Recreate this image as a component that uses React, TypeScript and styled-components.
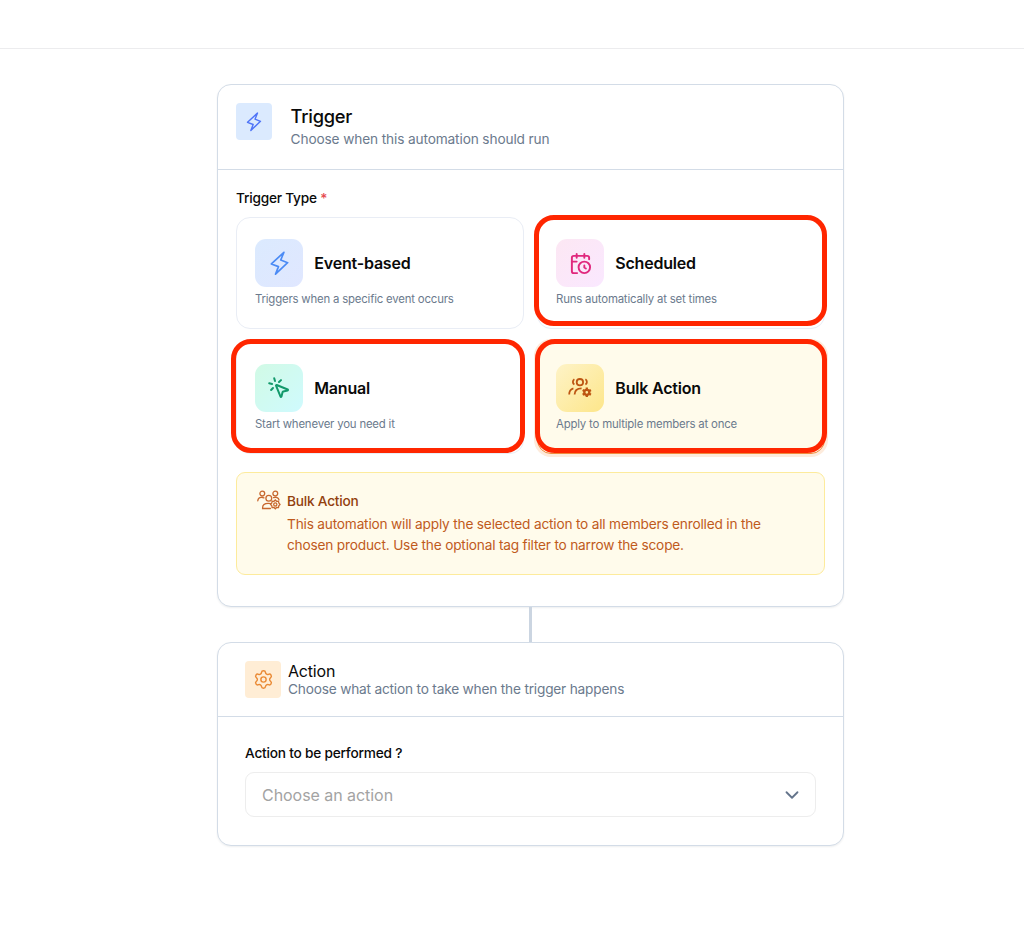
import React from "react";
import styled, { createGlobalStyle } from "styled-components";
import { CalendarClock, MousePointerClick, Settings, ChevronDown } from "lucide-react";

const GlobalStyle = createGlobalStyle`
  *, *::before, *::after { box-sizing: border-box; }
  body { margin: 0; background: #fff; font-family: Inter, "Liberation Sans", sans-serif; color: #0a0a0a; }
  svg { display: block; flex: none; }
`;

const Page = styled.div`
  min-height: 936px;
`;

const TopBar = styled.header`
  height: 49px;
  border-bottom: 1px solid #ececee;
`;

const Flow = styled.main`
  width: 627px;
  margin: 35px 0 0 217px;
  display: flex;
  flex-direction: column;
  align-items: center;
`;

const Panel = styled.section<{ $height: number }>`
  width: 100%;
  height: ${(p) => p.$height}px;
  border: 1px solid #d3dce7;
  border-radius: 14px;
  background: #fff;
  box-shadow: 0 1px 2px rgba(15, 23, 42, 0.07);
`;

const TriggerHeader = styled.div`
  display: flex;
  gap: 18.6px;
  height: 85px;
  padding: 18px 18px 0;
  border-bottom: 1px solid #d3dce7;
`;

const ActionHeader = styled.div`
  display: flex;
  gap: 7px;
  height: 74px;
  padding: 18px 27px 0;
  border-bottom: 1px solid #d3dce7;
`;

const HeaderIcon = styled.div<{ $bg: string; $color: string }>`
  width: 36px;
  height: 37px;
  border-radius: 4px;
  display: flex;
  align-items: center;
  justify-content: center;
  flex: none;
  background: ${(p) => p.$bg};
  color: ${(p) => p.$color};
`;

const TriggerTitle = styled.h2`
  margin: 0;
  font-size: 18.3px;
  line-height: 26px;
  font-weight: 500;
  letter-spacing: -0.25px;
`;

const ActionTitle = styled.h2`
  margin: 1px 0 0;
  font-size: 16px;
  line-height: 18px;
  font-weight: 400;
  letter-spacing: -0.2px;
`;

const Subtitle = styled.p<{ $line: number; $tracking: number }>`
  margin: 0;
  font-size: 13.7px;
  line-height: ${(p) => p.$line}px;
  letter-spacing: ${(p) => p.$tracking}px;
  color: #6b7a8d;
`;

const TriggerBody = styled.div`
  padding: 18px 18px 0;
`;

const ActionBody = styled.div`
  padding: 26px 27px 0;
`;

const FieldLabel = styled.div`
  font-size: 13.7px;
  line-height: 20px;
  font-weight: 500;
  letter-spacing: -0.22px;
`;

const Required = styled.span`
  color: #e5484d;
`;

const TypeGrid = styled.div`
  display: grid;
  grid-template-columns: 1fr 1fr;
  grid-auto-rows: 112px;
  gap: 13px;
  margin-top: 9px;
`;

const TypeCard = styled.div<{ $selected?: boolean }>`
  position: relative;
  padding: 21px 18px 0;
  border: 1px solid ${(p) => (p.$selected ? "#f08a3c" : "#e9edf5")};
  border-radius: 14px;
  background: ${(p) => (p.$selected ? "#fffbeb" : "#fff")};
  box-shadow: ${(p) => (p.$selected ? "0 0 0 3px #fdebdc" : "none")};
`;

const TypeTop = styled.div`
  display: flex;
  align-items: center;
  gap: 11.3px;
`;

const TypeIcon = styled.div<{ $from: string; $to: string; $color: string }>`
  width: 48px;
  height: 48px;
  border-radius: 11px;
  display: flex;
  align-items: center;
  justify-content: center;
  color: ${(p) => p.$color};
  background: linear-gradient(135deg, ${(p) => p.$from}, ${(p) => p.$to});
`;

const TypeName = styled.div`
  font-size: 16px;
  line-height: 24px;
  font-weight: 600;
  letter-spacing: -0.2px;
`;

const TypeText = styled.div`
  margin-top: 4px;
  font-size: 11.4px;
  line-height: 17px;
  letter-spacing: -0.19px;
  color: #6b7a8d;
`;

const Highlight = styled.span<{ $inset: string }>`
  position: absolute;
  inset: ${(p) => p.$inset};
  border: 5px solid #ff2600;
  border-radius: 20px;
  pointer-events: none;
`;

const Notice = styled.div`
  display: flex;
  gap: 6px;
  height: 103px;
  margin-top: 18px;
  padding: 17px 20px 0;
  border: 1px solid #fdeb9c;
  border-radius: 9px;
  background: #fffbeb;
`;

const NoticeIcon = styled.div`
  color: #c8682f;
`;

const NoticeTitle = styled.div`
  font-size: 13.7px;
  line-height: 23px;
  font-weight: 500;
  letter-spacing: -0.24px;
  color: #92400e;
`;

const NoticeText = styled.div`
  margin-top: 1px;
  font-size: 13.7px;
  line-height: 21px;
  letter-spacing: -0.2px;
  color: #c05a1c;
`;

const Connector = styled.div`
  width: 3px;
  height: 35px;
  background: #cbd5e1;
`;

const Select = styled.div`
  display: flex;
  align-items: center;
  justify-content: space-between;
  height: 45px;
  margin-top: 9px;
  padding: 0 12px 0 16px;
  border: 1px solid #ededed;
  border-radius: 9px;
  font-size: 16px;
  letter-spacing: -0.05px;
  color: #a3a3a3;
`;

const Bolt = ({ size, weight }: { size: number; weight: number }) => (
  <svg
    width={size}
    height={size}
    viewBox="0 0 24 24"
    fill="none"
    stroke="currentColor"
    strokeWidth={weight}
    strokeLinecap="round"
    strokeLinejoin="round"
  >
    <path d="M16.2 1.3 4.2 12.4 11 15 8.2 22.2 19.8 11.2 13.2 8.6Z" />
  </svg>
);

const GroupGear = () => (
  <svg width="26" height="26" viewBox="0 0 26 26" fill="none" stroke="currentColor" strokeWidth="1.8">
    <circle cx="12.9" cy="7.2" r="3.2" />
    <path d="M7.4 4.3a3 3 0 0 0 0 5.2M18.4 4.3a3 3 0 0 1 0 5.2" />
    <path d="M2.2 19.6c0-3.4 1.4-5.5 4.2-6.2M7.6 19.6c0-4 2.3-6.2 7-6.2" />
    <circle cx="19.8" cy="17.3" r="2.5" strokeWidth="2.3" />
    <path d="M19.8 12.6v2M19.8 20v2M15.7 14.9l1.7 1M22.2 18.7l1.7 1M15.7 19.7l1.7-1M22.2 15.9l1.7-1" strokeWidth="2.3" />
  </svg>
);

const MembersGear = () => (
  <svg width="24" height="22" viewBox="0 0 24 22" fill="none" stroke="currentColor" strokeWidth="1.3" strokeLinecap="round">
    <circle cx="5.3" cy="3.6" r="2.4" />
    <circle cx="18.3" cy="3.6" r="2.4" />
    <circle cx="11.8" cy="8.3" r="2.9" />
    <path d="M.8 10.8c.2-2.3 1.5-3.5 3.5-3.5 1 0 1.8.1 2.6.6M16.5 7.6c2.7-.8 5.1.2 5.5 2.2" />
    <path d="M13.4 18.5H5.6v-.8c0-2.8 2.2-4.4 5.6-4.4 1 0 1.7.1 2.5.4" />
    <path d="m18.3 10 1.3 1.3 1.9-.1.3 1.8 1.2 1.4-1.2 1.4-.3 1.8-1.9-.1-1.3 1.3-1.3-1.3-1.9.1-.3-1.8-1.2-1.4 1.2-1.4.3-1.8 1.9.1z" />
    <circle cx="18.3" cy="14.4" r="1.6" />
  </svg>
);

type TriggerType = {
  name: string;
  text: string;
  icon: React.ReactNode;
  from: string;
  to: string;
  color: string;
  selected?: boolean;
  highlight?: string;
};

const triggerTypes: TriggerType[] = [
  { name: "Event-based", text: "Triggers when a specific event occurs", icon: <Bolt size={25} weight={1.6} />, from: "#dbeafe", to: "#e0e7ff", color: "#4b8bf5" },
  { name: "Scheduled", text: "Runs automatically at set times", icon: <CalendarClock size={23} strokeWidth={2} />, from: "#fce7f3", to: "#fae8ff", color: "#e0287d", highlight: "-3px -3px 2px -4px" },
  { name: "Manual", text: "Start whenever you need it", icon: <MousePointerClick size={24} strokeWidth={2} />, from: "#d1fae5", to: "#cffafe", color: "#12996b", highlight: "-4px -2px 0px -6px" },
  { name: "Bulk Action", text: "Apply to multiple members at once", icon: <GroupGear />, from: "#fef3c7", to: "#fde68a", color: "#bd5512", selected: true, highlight: "-4px -3px 0px -3px" },
];

export default function App() {
  return (
    <Page>
      <GlobalStyle />
      <TopBar />
      <Flow>
        <Panel $height={523}>
          <TriggerHeader>
            <HeaderIcon $bg="#dbeafe" $color="#4f74f7">
              <Bolt size={20} weight={1.7} />
            </HeaderIcon>
            <div>
              <TriggerTitle>Trigger</TriggerTitle>
              <Subtitle $line={21} $tracking={-0.14}>Choose when this automation should run</Subtitle>
            </div>
          </TriggerHeader>
          <TriggerBody>
            <FieldLabel>
              Trigger Type <Required>*</Required>
            </FieldLabel>
            <TypeGrid>
              {triggerTypes.map((t) => (
                <TypeCard key={t.name} $selected={t.selected}>
                  <TypeTop>
                    <TypeIcon $from={t.from} $to={t.to} $color={t.color}>
                      {t.icon}
                    </TypeIcon>
                    <TypeName>{t.name}</TypeName>
                  </TypeTop>
                  <TypeText>{t.text}</TypeText>
                  {t.highlight && <Highlight $inset={t.highlight} />}
                </TypeCard>
              ))}
            </TypeGrid>
            <Notice>
              <NoticeIcon>
                <MembersGear />
              </NoticeIcon>
              <div>
                <NoticeTitle>Bulk Action</NoticeTitle>
                <NoticeText>
                  This automation will apply the selected action to all members enrolled in the
                  <br />
                  chosen product. Use the optional tag filter to narrow the scope.
                </NoticeText>
              </div>
            </Notice>
          </TriggerBody>
        </Panel>
        <Connector />
        <Panel $height={204}>
          <ActionHeader>
            <HeaderIcon $bg="#ffedd5" $color="#ea8a35">
              <Settings size={21} strokeWidth={1.6} />
            </HeaderIcon>
            <div>
              <ActionTitle>Action</ActionTitle>
              <Subtitle $line={18} $tracking={-0.2}>Choose what action to take when the trigger happens</Subtitle>
            </div>
          </ActionHeader>
          <ActionBody>
            <FieldLabel>Action to be performed ?</FieldLabel>
            <Select>
              Choose an action
              <ChevronDown size={22} color="#64748b" strokeWidth={2} />
            </Select>
          </ActionBody>
        </Panel>
      </Flow>
    </Page>
  );
}
